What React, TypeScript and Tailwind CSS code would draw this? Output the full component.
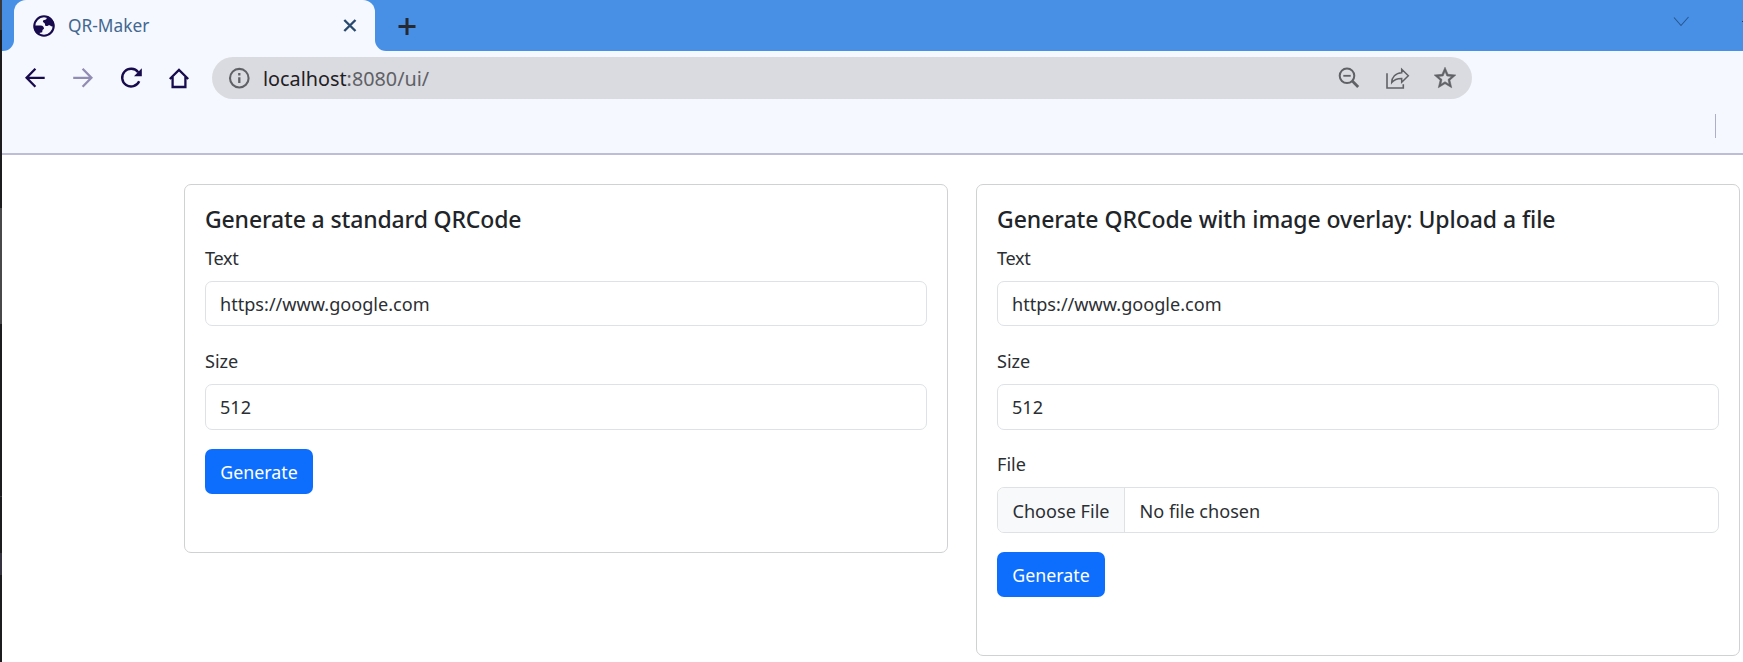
import type { ReactNode } from "react";

function Icon({ box, className = "", children }: { box: [number, number, number, number]; className?: string; children: ReactNode }) {
  return (
    <svg viewBox={box.join(" ")} width={box[2]} height={box[3]} fill="none" className={`shrink-0 ${className}`}>
      {children}
    </svg>
  );
}

function TabStrip() {
  return (
    <div className="flex h-[51px] bg-[#f5f8fe]">
      <div className="w-3 rounded-br-[11px] bg-[#4790e6]" />
      <div className="w-[361px] bg-[#4790e6]">
        <div className="flex h-full items-center rounded-t-[12px] bg-[#f5f8fe] pl-[18px] pr-[17px]">
          <Icon box={[0, 0, 24, 24]} className="text-[#170b4d]">
            <circle cx="12" cy="12" r="9.7" stroke="currentColor" strokeWidth="2.1" />
            <path
              fill="currentColor"
              d="M15.6 2.2C14.6 3.3 15 4.4 14.2 5.2C13.2 6.1 11.4 5.6 10.9 7C10.5 8.3 12.5 8.5 12.9 9.8C13.2 10.9 12.7 11.7 14.1 12C15.6 12.3 16.4 11 17.6 11.3C18.6 11.5 18.8 12.4 20.2 12.6L22.2 12.4C22.6 8 20 3.8 15.6 2.2ZM1.8 11.6L8.8 11.5C11 11.6 11.9 12.9 12 14.8L10.5 15.9L10.2 18.2L7.3 19L7.4 21L4.5 19.4C2.6 17.4 1.6 14.5 1.8 11.6Z"
            />
          </Icon>
          <span className="ml-3 text-[17.3px] leading-6 text-[#436790]">QR-Maker</span>
          <Icon box={[343, 18, 15, 15]} className="ml-auto text-[#29496f]">
            <path d="M344.3 20L355.5 31M355.5 20L344.3 31" stroke="currentColor" strokeWidth="2.4" />
          </Icon>
        </div>
      </div>
      <div className="flex flex-1 items-center rounded-bl-[11px] bg-[#4790e6] pl-[23px]">
        <Icon box={[398, 16, 18, 18]} className="text-[#26292f]">
          <path d="M407 17V34M398.5 25.5H415.5" stroke="currentColor" strokeWidth="3" />
        </Icon>
        <Icon box={[1673, 16, 17, 12]} className="-mt-2 ml-auto text-[#29578f]">
          <path d="M1674 17.5L1681 25.5L1688.5 17" stroke="currentColor" strokeWidth="1.1" />
        </Icon>
        <span className="-mt-2 ml-[52px] h-px w-px bg-[#1f3f66]" />
      </div>
    </div>
  );
}

function Toolbar() {
  return (
    <div className="flex h-[104px] flex-col border-b-2 border-[#bdbdd6] bg-[#f5f8fe]">
      <div className="mt-1.5 flex h-[42px] items-center pl-[22px] text-[#170b4d]">
        <Icon box={[24, 66, 22, 24]}>
          <path d="M44.7 77.8H27M35.4 68.8L26.6 77.8L35.4 86.8" stroke="currentColor" strokeWidth="2.3" />
        </Icon>
        <Icon box={[72, 66, 22, 24]} className="ml-[26px] text-[#918cb4]">
          <path d="M73.2 77.8H91M82.6 68.8L91.4 77.8L82.6 86.8" stroke="currentColor" strokeWidth="2.3" />
        </Icon>
        <Icon box={[120, 66, 24, 24]} className="ml-[26px]">
          <path d="M138.2 72.2A8.9 8.9 0 1 0 139.2 81.3" stroke="currentColor" strokeWidth="2.4" />
          <path d="M141.8 68.3V76.2H134Z" fill="currentColor" />
        </Icon>
        <Icon box={[168, 66, 22, 24]} className="ml-6">
          <path d="M169.8 79L179 69.9L188.2 79M172.6 77V87H185.4V77" stroke="currentColor" strokeWidth="2.3" />
        </Icon>
        <div className="ml-[22px] flex h-[42px] w-[1260px] items-center rounded-full bg-[#dadbe0] pl-4 pr-[14px] text-[#5f6166]">
          <Icon box={[228, 66, 23, 24]}>
            <circle cx="239.3" cy="78.2" r="9.3" stroke="currentColor" strokeWidth="2.1" />
            <path d="M239.3 77.3V83M239.3 73V75.4" stroke="currentColor" strokeWidth="2.3" />
          </Icon>
          <span className="ml-3 pt-0.5 text-[19.8px] leading-7">
            <span className="text-[#1f2024]">localhost</span>:8080/ui/
          </span>
          <Icon box={[1337, 66, 24, 24]} className="ml-auto">
            <circle cx="1347" cy="75.8" r="7.3" stroke="currentColor" strokeWidth="2" />
            <path d="M1343.3 75.8H1350.7" stroke="currentColor" strokeWidth="1.8" />
            <path d="M1352.3 81L1358.2 86.9" stroke="currentColor" strokeWidth="2.8" />
          </Icon>
          <Icon box={[1385, 66, 26, 24]} className="ml-6">
            <path d="M1387 73.3V88H1403.3V84.3" stroke="currentColor" strokeWidth="1.6" />
            <path
              d="M1401.7 69.2L1408.3 75.7L1401.7 82.2V78.5C1397 78.4 1394 79.8 1391.7 82.6C1391.7 77.3 1395.5 73 1401.7 72.7Z"
              stroke="currentColor"
              strokeWidth="1.5"
            />
          </Icon>
          <svg viewBox="0 0 24 24" width="26" height="26" className="ml-[21px] shrink-0" fill="currentColor" stroke="currentColor" strokeWidth="0.5">
            <path d="m22 9.24-7.19-.62L12 2 9.19 8.63 2 9.24l5.46 4.73L5.82 21 12 17.27 18.18 21l-1.63-7.03L22 9.24zM12 15.4l-3.76 2.27 1-4.28-3.32-2.88 4.38-.38L12 6.1l1.71 4.04 4.38.38-3.32 2.88 1 4.28L12 15.4z" />
          </svg>
        </div>
      </div>
      <div className="mt-[15px] flex justify-end pr-[27px]">
        <span className="h-6 w-px bg-[#aeaec9]" />
      </div>
    </div>
  );
}

function Field({
  label,
  value,
  labelClass = "",
  boxClass = "h-[46px]",
  file = false,
}: {
  label: string;
  value: string;
  labelClass?: string;
  boxClass?: string;
  file?: boolean;
}) {
  return (
    <div className="h-[103px]">
      <div className={`mb-[9px] h-[29px] pt-px leading-[29px] ${labelClass}`}>{label}</div>
      <div className={`flex items-center overflow-hidden rounded-[7px] border border-[#dee2e6] ${boxClass}`}>
        {file && (
          <div className="flex h-full w-[127px] items-center justify-center border-r border-[#dee2e6] bg-[#f8f9fa] pt-[3px]">
            Choose File
          </div>
        )}
        <span className={file ? "pl-[14.5px] pt-[3px]" : "pl-[14px] pt-0.5"}>{value}</span>
      </div>
    </div>
  );
}

function Card({ title, titleClass, file = false }: { title: string; titleClass: string; file?: boolean }) {
  return (
    <section
      className={`w-[764px] shrink-0 rounded-[7px] border border-[#d0d1d3] px-5 pt-[19px] ${file ? "h-[472px]" : "h-[369px]"}`}
    >
      <h5 className={`mb-2 h-[31px] whitespace-nowrap text-[23px] font-medium leading-[31px] ${titleClass}`}>{title}</h5>
      <Field label="Text" value="https://www.google.com" labelClass="tracking-[-0.3px]" boxClass="h-[45px]" />
      <Field label="Size" value="512" />
      {file && <Field label="File" value="No file chosen" file />}
      <button className="flex h-[45px] w-[108px] items-center justify-center rounded-[7px] bg-[#0d6efd] pt-0.5 text-[17.8px] text-white">
        Generate
      </button>
    </section>
  );
}

export default function App() {
  return (
    <div className="flex h-[662px] w-[1743px] overflow-hidden bg-white font-['Noto_Sans','Open_Sans',sans-serif]">
      <div className="flex w-0.5 shrink-0 flex-col bg-[#1c1b1d]">
        <div className="h-[30px] bg-[#3a3a3c]" />
        <div className="mt-[178px] h-[116px] bg-[#48484a]" />
        <div className="mt-[172px] h-px bg-[#3a3a3c]" />
        <div className="mt-14 h-[22px] bg-[#35333f]" />
      </div>
      <div className="flex min-w-0 flex-1 flex-col">
        <TabStrip />
        <Toolbar />
        <main className="flex items-start gap-7 pl-[182px] pt-[29px] text-[18.1px] text-[#2b2f33]">
          <Card title="Generate a standard QRCode" titleClass="text-[#212529] tracking-[-0.15px]" />
          <Card title="Generate QRCode with image overlay: Upload a file" titleClass="text-[#212529] tracking-[-0.06px]" file />
        </main>
      </div>
    </div>
  );
}
